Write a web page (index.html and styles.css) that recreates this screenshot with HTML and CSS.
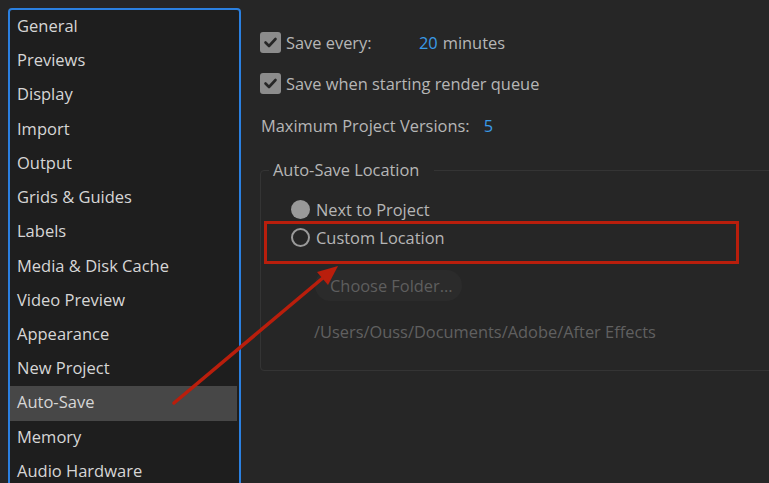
FILE: index.html
```html
<!DOCTYPE html>
<html>
<head>
<meta charset="utf-8">
<link rel="stylesheet" href="styles.css">
</head>
<body>
<div class="window">
  <nav class="sidebar">
    <div class="item">General</div>
    <div class="item">Previews</div>
    <div class="item">Display</div>
    <div class="item">Import</div>
    <div class="item">Output</div>
    <div class="item">Grids &amp; Guides</div>
    <div class="item">Labels</div>
    <div class="item">Media &amp; Disk Cache</div>
    <div class="item">Video Preview</div>
    <div class="item">Appearance</div>
    <div class="item">New Project</div>
    <div class="item selected">Auto-Save</div>
    <div class="item">Memory</div>
    <div class="item">Audio Hardware</div>
  </nav>
  <main class="panel">
    <div class="check-row">
      <span class="checkbox"><svg width="21" height="21" viewBox="0 0 21 21"><path d="M5.5 10.5 L9 14 L15.5 7" fill="none" stroke="#262626" stroke-width="2.6" stroke-linecap="round" stroke-linejoin="round"/></svg></span>
      <span class="label save-label">Save every:</span>
      <span class="value">20</span>
      <span class="label">minutes</span>
    </div>
    <div class="check-row second">
      <span class="checkbox"><svg width="21" height="21" viewBox="0 0 21 21"><path d="M5.5 10.5 L9 14 L15.5 7" fill="none" stroke="#262626" stroke-width="2.6" stroke-linecap="round" stroke-linejoin="round"/></svg></span>
      <span class="label">Save when starting render queue</span>
    </div>
    <div class="versions-row">
      <span class="label">Maximum Project Versions:</span>
      <span class="value">5</span>
    </div>
    <fieldset class="group">
      <legend>Auto-Save Location</legend>
      <div class="group-body">
        <div class="radio-row"><span class="radio filled"></span><span class="label">Next to Project</span></div>
        <div class="radio-row"><span class="radio ring"></span><span class="label">Custom Location</span></div>
        <div class="choose-btn">Choose Folder...</div>
        <div class="path">/Users/Ouss/Documents/Adobe/After Effects</div>
      </div>
    </fieldset>
  </main>
  <div class="highlight"></div>
  <svg class="arrow" width="769" height="483" viewBox="0 0 769 483">
    <line x1="174" y1="403" x2="324" y2="277" stroke="#b91e0c" stroke-width="3.5" stroke-linecap="round"/>
    <polygon points="338,266 328,285 317,272" fill="#b91e0c"/>
  </svg>
</div>
</body>
</html>
```

FILE: styles.css
```css
html, body {
  margin: 0;
  padding: 0;
  background: #262626;
  overflow: hidden;
}
.window {
  position: relative;
  width: 769px;
  height: 483px;
  display: flex;
  font-family: "Open Sans", "Noto Sans", sans-serif;
  overflow: hidden;
}
.sidebar {
  margin: 8px 0 0 8px;
  width: 229px;
  height: 500px;
  flex: none;
  background: #1e1e1e;
  border: 2px solid #2b80e0;
  border-radius: 4px 4px 0 0;
}
.item {
  height: 34.23px;
  line-height: 32px;
  padding-left: 7px;
  margin: 0 2px 0 0;
  font-size: 16.5px;
  color: #d6d6d6;
  white-space: nowrap;
}
.item.selected {
  background: #474747;
}
.panel {
  flex: 1;
  padding: 32px 0 0 19px;
  display: flex;
  flex-direction: column;
  color: #b6b6b6;
  font-size: 16.4px;
}
.check-row {
  display: flex;
  align-items: center;
  height: 21px;
  white-space: nowrap;
}
.check-row.second {
  margin-top: 20px;
}
.checkbox {
  width: 21px;
  height: 21px;
  border-radius: 3px;
  background: #8c8c8c;
  display: block;
  flex: none;
  margin-right: 5px;
}
.checkbox svg { display: block; }
.save-label {
  width: 133px;
}
.value {
  color: #3a9be8;
  margin-right: 5px;
}
.versions-row {
  margin-top: 22px;
  height: 20px;
  line-height: 20px;
  padding-left: 1px;
  white-space: nowrap;
}
.versions-row .label {
  margin-right: 10px;
}
.group {
  margin: 23px 0 0 0;
  width: 700px;
  border: 1px solid #343434;
  border-radius: 4px;
  padding: 0;
  min-width: 0;
}
.group legend {
  margin-left: 8px;
  padding: 0 15px 0 4px;
  line-height: 22px;
  font-size: 16.4px;
  color: #b6b6b6;
}
.group-body {
  padding: 14px 0 28px 30px;
  display: flex;
  flex-direction: column;
  align-items: flex-start;
}
.radio-row {
  display: flex;
  align-items: center;
  height: 28px;
}
.radio {
  width: 19px;
  height: 19px;
  border-radius: 50%;
  box-sizing: border-box;
  margin-right: 6px;
  flex: none;
}
.radio.filled {
  background: #999;
}
.radio.ring {
  border: 2.5px solid #9a9a9a;
}
.choose-btn {
  margin: 19px 0 0 24px;
  width: 147px;
  height: 31px;
  line-height: 31px;
  box-sizing: border-box;
  padding-left: 15px;
  border-radius: 16px;
  background: #2b2b2b;
  color: #5e5e5e;
  white-space: nowrap;
}
.path {
  margin: 21px 0 0 23px;
  line-height: 20px;
  color: #606060;
  white-space: nowrap;
}
.highlight {
  position: absolute;
  left: 264px;
  top: 221px;
  width: 475px;
  height: 43px;
  box-sizing: border-box;
  border: 3px solid #b91e0c;
  pointer-events: none;
}
.arrow {
  position: absolute;
  left: 0;
  top: 0;
  pointer-events: none;
}
```
